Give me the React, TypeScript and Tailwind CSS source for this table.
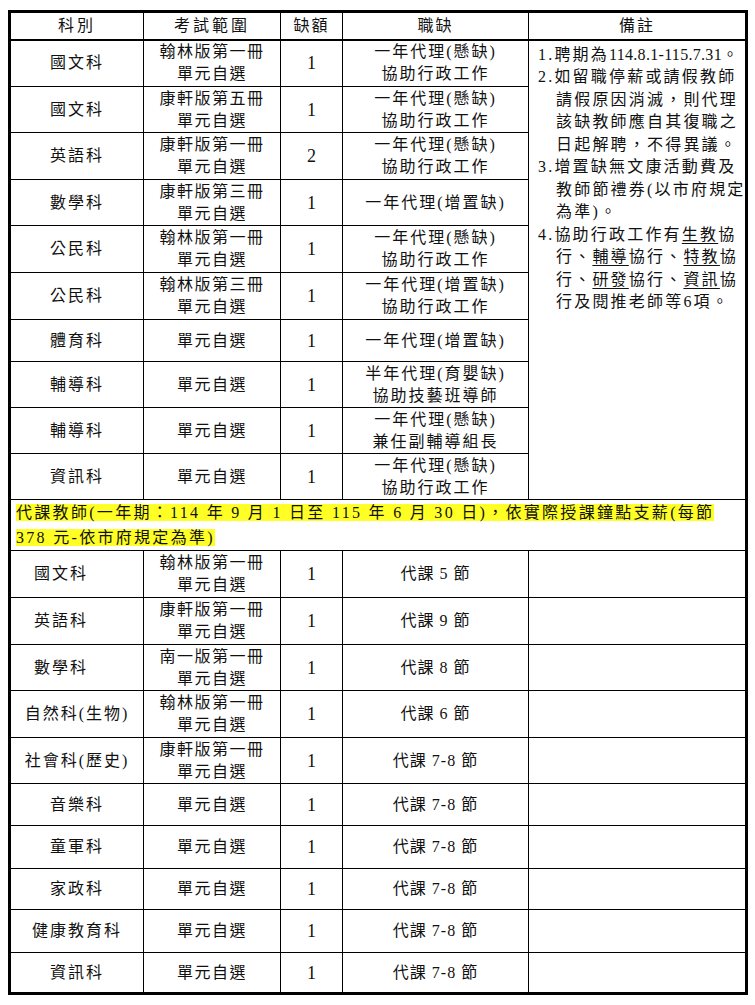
type Row = {
  subject: string;
  range: string[];
  count: string;
  job: string[];
  h: string;
  shift?: boolean;
};

const section1: Row[] = [
  { subject: "國文科", range: ["翰林版第一冊", "單元自選"], count: "1", job: ["一年代理(懸缺)", "協助行政工作"], h: "h-[47px]" },
  { subject: "國文科", range: ["康軒版第五冊", "單元自選"], count: "1", job: ["一年代理(懸缺)", "協助行政工作"], h: "h-[46px]" },
  { subject: "英語科", range: ["康軒版第一冊", "單元自選"], count: "2", job: ["一年代理(懸缺)", "協助行政工作"], h: "h-[47px]" },
  { subject: "數學科", range: ["康軒版第三冊", "單元自選"], count: "1", job: ["一年代理(增置缺)"], h: "h-[46px]" },
  { subject: "公民科", range: ["翰林版第一冊", "單元自選"], count: "1", job: ["一年代理(懸缺)", "協助行政工作"], h: "h-[47px]" },
  { subject: "公民科", range: ["翰林版第三冊", "單元自選"], count: "1", job: ["一年代理(增置缺)", "協助行政工作"], h: "h-[47px]" },
  { subject: "體育科", range: ["單元自選"], count: "1", job: ["一年代理(增置缺)"], h: "h-[42px]" },
  { subject: "輔導科", range: ["單元自選"], count: "1", job: ["半年代理(育嬰缺)", "協助技藝班導師"], h: "h-[46px]" },
  { subject: "輔導科", range: ["單元自選"], count: "1", job: ["一年代理(懸缺)", "兼任副輔導組長"], h: "h-[46px]" },
  { subject: "資訊科", range: ["單元自選"], count: "1", job: ["一年代理(懸缺)", "協助行政工作"], h: "h-[46px]" },
];

const section2: Row[] = [
  { subject: "國文科", range: ["翰林版第一冊", "單元自選"], count: "1", job: ["代課 5 節"], h: "h-[47px]", shift: true },
  { subject: "英語科", range: ["康軒版第一冊", "單元自選"], count: "1", job: ["代課 9 節"], h: "h-[47px]", shift: true },
  { subject: "數學科", range: ["南一版第一冊", "單元自選"], count: "1", job: ["代課 8 節"], h: "h-[46px]", shift: true },
  { subject: "自然科(生物)", range: ["翰林版第一冊", "單元自選"], count: "1", job: ["代課 6 節"], h: "h-[47px]" },
  { subject: "社會科(歷史)", range: ["康軒版第一冊", "單元自選"], count: "1", job: ["代課 7-8 節"], h: "h-[46px]" },
  { subject: "音樂科", range: ["單元自選"], count: "1", job: ["代課 7-8 節"], h: "h-[42px]" },
  { subject: "童軍科", range: ["單元自選"], count: "1", job: ["代課 7-8 節"], h: "h-[43px]" },
  { subject: "家政科", range: ["單元自選"], count: "1", job: ["代課 7-8 節"], h: "h-[41px]" },
  { subject: "健康教育科", range: ["單元自選"], count: "1", job: ["代課 7-8 節"], h: "h-[43px]" },
  { subject: "資訊科", range: ["單元自選"], count: "1", job: ["代課 7-8 節"], h: "h-[41px]" },
];

const cell = "border border-black text-center align-middle p-0 leading-[22px]";

const U = ({ children }: { children: string }) => (
  <span className="underline underline-offset-[3px]">{children}</span>
);

// 備註欄，一行一行照原稿斷行
const Remarks = () => (
  <div className="pl-[9px] pt-[3px] text-left text-[16px] leading-[22.5px] tracking-[2.2px] whitespace-nowrap">
    <div>
      1.聘期為<span className="tracking-[0.3px]">114.8.1-115.7.31</span>。
    </div>
    <div>2.如留職停薪或請假教師</div>
    <div className="pl-[18px]">請假原因消滅，則代理</div>
    <div className="pl-[18px]">該缺教師應自其復職之</div>
    <div className="pl-[18px]">日起解聘，不得異議。</div>
    <div>3.增置缺無文康活動費及</div>
    <div className="pl-[18px]">教師節禮券(以市府規定</div>
    <div className="pl-[18px]">為準)。</div>
    <div>4.協助行政工作有<U>生教</U>協</div>
    <div className="pl-[18px]">行、<U>輔導</U>協行、<U>特教</U>協</div>
    <div className="pl-[18px]">行、<U>研發</U>協行、<U>資訊</U>協</div>
    <div className="pl-[18px]">行及閱推老師等6項。</div>
  </div>
);

const Lines = ({ lines }: { lines: string[] }) => (
  <>
    {lines.map((l, i) => (
      <div key={i} className="whitespace-nowrap">
        {l}
      </div>
    ))}
  </>
);

export default function App() {
  return (
    <div className="bg-white min-h-[1005px] pt-[10px] pl-[8px] text-[#111] font-[family-name:'Liberation_Serif','Noto_Sans_CJK_TC',serif]">
      <table className="w-[737px] table-fixed border-collapse border-[3px] border-black text-[16px]">
        <colgroup>
          <col className="w-[134px]" />
          <col className="w-[137px]" />
          <col className="w-[62px]" />
          <col className="w-[186px]" />
          <col className="w-[218px]" />
        </colgroup>
        <thead>
          <tr className="h-[28px]">
            <th className={`${cell} border-b-2 font-normal tracking-[3px]`}>科別</th>
            <th className={`${cell} border-b-2 font-normal tracking-[3px]`}>考試範圍</th>
            <th className={`${cell} border-b-2 font-normal tracking-[2px]`}>缺額</th>
            <th className={`${cell} border-b-2 font-normal tracking-[2px]`}>職缺</th>
            <th className={`${cell} border-b-2 font-normal tracking-[2px]`}>備註</th>
          </tr>
        </thead>
        <tbody>
          {section1.map((r, i) => (
            <tr key={i} className={r.h}>
              <td className={`${cell} tracking-[2px]`}>{r.subject}</td>
              <td className={`${cell} tracking-[1.5px]`}>
                <Lines lines={r.range} />
              </td>
              <td className={`${cell} text-[18px]`}>{r.count}</td>
              <td className={`${cell} tracking-[2px]`}>
                <Lines lines={r.job} />
              </td>
              {i === 0 && (
                <td rowSpan={section1.length} className={`${cell} align-top`}>
                  <Remarks />
                </td>
              )}
            </tr>
          ))}

          <tr className="h-[51px]">
            <td colSpan={5} className="border border-black p-0 pl-[5px] text-left align-middle text-[16px] leading-[25px] tracking-[2.3px]">
              <span className="bg-[#ffff26] whitespace-nowrap">
                代課教師(一年期：114 年 9 月 1 日至 115 年 6 月 30 日)，依實際授課鐘點支薪(每節
              </span>
              <br />
              <span className="bg-[#ffff26] whitespace-nowrap">378 元-依市府規定為準)</span>
            </td>
          </tr>

          {section2.map((r, i) => (
            <tr key={i} className={r.h}>
              <td className={`${cell} tracking-[2px] ${r.shift ? "pr-[32px]" : ""}`}>{r.subject}</td>
              <td className={`${cell} tracking-[1.5px]`}>
                <Lines lines={r.range} />
              </td>
              <td className={`${cell} text-[18px]`}>{r.count}</td>
              <td className={`${cell} tracking-[1px]`}>
                <Lines lines={r.job} />
              </td>
              <td className={cell}></td>
            </tr>
          ))}
        </tbody>
      </table>
    </div>
  );
}
